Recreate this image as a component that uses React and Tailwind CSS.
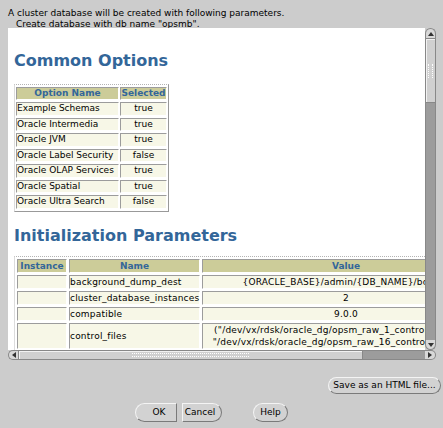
import React from "react";

const options = [
  ["Example Schemas", "true"],
  ["Oracle Intermedia", "true"],
  ["Oracle JVM", "true"],
  ["Oracle Label Security", "false"],
  ["Oracle OLAP Services", "true"],
  ["Oracle Spatial", "true"],
  ["Oracle Ultra Search", "false"],
];

const params = [
  ["background_dump_dest", ["{ORACLE_BASE}/admin/{DB_NAME}/bdump"]],
  ["cluster_database_instances", ["2"]],
  ["compatible", ["9.0.0"]],
  [
    "control_files",
    [
      '("/dev/vx/rdsk/oracle_dg/opsm_raw_1_control01_110m",',
      '"/dev/vx/rdsk/oracle_dg/opsm_raw_16_control02_110m")',
    ],
  ],
];

const cell =
  "border border-t-[#9c9c9c] border-l-[#9c9c9c] border-r-white border-b-white bg-[#f7f7e7] p-0 align-middle";
const head =
  "border border-t-[#9c9c9c] border-l-[#9c9c9c] border-r-white border-b-white bg-[#cccc99] p-0 text-[#336699] font-bold text-center align-middle";

function Arrow({ dir }) {
  const pts = {
    up: "0,4 3,0 6,4",
    down: "0,0 3,4 6,0",
    left: "4,0 0,3 4,6",
    right: "0,0 4,3 0,6",
  }[dir];
  const box = dir === "up" || dir === "down" ? "0 0 6 4" : "0 0 4 6";
  const size = dir === "up" || dir === "down" ? "w-[6px] h-[4px]" : "w-[4px] h-[6px]";
  return (
    <svg viewBox={box} className={size}>
      <polygon points={pts} fill="#333" />
    </svg>
  );
}

function VScroll() {
  return (
    <div className="w-[11px] h-[322px] flex flex-col">
      <div className="h-[10px] rounded-t-full border border-b-0 border-[#888] bg-[#d8d8d8] flex items-center justify-center">
        <Arrow dir="up" />
      </div>
      <div className="h-[65px] border border-[#888] bg-[#d0d0d0] shadow-[inset_1px_1px_0_#f2f2f2] flex items-center justify-center">
        <div className="w-[5px] h-[14px] border-x border-dotted border-white" />
      </div>
      <div className="flex-1 bg-[#9c9c9c] border-x border-[#888]" />
      <div className="h-[10px] rounded-b-full border border-t-0 border-[#888] bg-[#d8d8d8] flex items-center justify-center">
        <Arrow dir="down" />
      </div>
    </div>
  );
}

function HScroll() {
  return (
    <div className="h-[10px] w-[428px] flex">
      <div className="w-[10px] rounded-l-full border border-r-0 border-[#888] bg-[#d8d8d8] flex items-center justify-center">
        <Arrow dir="left" />
      </div>
      <div className="w-[345px] border border-[#888] bg-[#d0d0d0] shadow-[inset_1px_1px_0_#f2f2f2] flex items-center justify-center">
        <div className="w-[117px] h-[4px] border-y border-dotted border-white" />
      </div>
      <div className="w-[62px] bg-[#9c9c9c] border-y border-[#888]" />
      <div className="w-[11px] rounded-r-full border border-l-0 border-[#888] bg-[#d8d8d8] flex items-center justify-center">
        <Arrow dir="right" />
      </div>
    </div>
  );
}

export default function App() {
  return (
    <div className="w-[443px] h-[428px] bg-[#cccccc] font-['DejaVu_Sans',sans-serif] text-[9px] text-black overflow-hidden">
      <div className="h-[28px] pt-[8px] pl-[8px] leading-[11px] whitespace-nowrap">
        <p>A cluster database will be created with following parameters.</p>
        <p className="pl-[8px]">Create database with db name "opsmb".</p>
      </div>

      <div className="ml-[8px] w-[428px]">
        <div className="flex h-[322px]">
          <div className="w-[417px] bg-white overflow-hidden pl-[6px] pt-[23px]">
            <h2 className="text-[16px] leading-[20px] font-bold text-[#336699] whitespace-nowrap">
              Common Options
            </h2>
            <table className="mt-[13px] table-fixed w-[155px] border-separate border-spacing-x-[1px] border-spacing-y-[2px] border border-t-[#b4b4b4] border-l-[#dcdcdc] border-r-[#999] border-b-[#999] [border-top-style:dotted] leading-[11px] whitespace-nowrap">
              <thead>
                <tr>
                  <th className={head + " w-[103px] h-[13px]"}>Option Name</th>
                  <th className={head + " w-[47px] h-[13px]"}>Selected</th>
                </tr>
              </thead>
              <tbody>
                {options.map(([name, sel]) => (
                  <tr key={name}>
                    <td className={cell + " h-[13.5px] text-left"}>{name}</td>
                    <td className={cell + " h-[13.5px] text-center"}>{sel}</td>
                  </tr>
                ))}
              </tbody>
            </table>

            <h2 className="mt-[14px] text-[16px] leading-[20px] font-bold text-[#336699] whitespace-nowrap">
              Initialization Parameters
            </h2>
            <table className="mt-[10px] table-fixed w-[479px] border-separate border-spacing-[2px] border border-t-[#b4b4b4] border-l-[#dcdcdc] border-r-[#999] border-b-[#999] [border-top-style:dotted] leading-[12px] whitespace-nowrap">
              <thead>
                <tr>
                  <th className={head + " w-[50px] h-[13px]"}>Instance</th>
                  <th className={head + " w-[131px] h-[13px]"}>Name</th>
                  <th className={head + " w-[288px] h-[13px]"}>Value</th>
                </tr>
              </thead>
              <tbody className="tracking-[0.2px]">
                {params.map(([name, val]) => (
                  <tr key={name}>
                    <td className={cell + " h-[14px]"} />
                    <td className={cell + " h-[14px] text-left"}>{name}</td>
                    <td className={cell + " h-[14px] text-center"}>
                      {val.map((line) => (
                        <div key={line}>{line}</div>
                      ))}
                    </td>
                  </tr>
                ))}
                <tr>
                  <td className={cell + " h-[14px]"} />
                  <td className={cell + " h-[14px] text-left"}>core_dump_dest</td>
                  <td className={cell + " h-[14px] text-center"}>{"{ORACLE_BASE}/admin/{DB_NAME}/cdump"}</td>
                </tr>
              </tbody>
            </table>
          </div>
          <VScroll />
        </div>
        <HScroll />
      </div>

      <div className="flex justify-end pr-[2px] mt-[17px]">
        <button className="h-[17px] w-[113px] rounded-full border border-t-[#f4f4f4] border-l-[#f4f4f4] border-r-[#7a7a7a] border-b-[#7a7a7a] bg-[#d2d2d2] text-[9px] leading-[15px] text-black">
          Save as an HTML file...
        </button>
      </div>

      <div className="flex pl-[135px] mt-[9px]">
        <button className="h-[19px] w-[42px] rounded-l-full border border-t-[#f4f4f4] border-l-[#f4f4f4] border-r-[#7a7a7a] border-b-[#7a7a7a] bg-[#d2d2d2] text-[9px] pl-[6px] text-black">
          OK
        </button>
        <button className="ml-[5px] h-[19px] w-[40px] rounded-r-full border border-t-[#f4f4f4] border-l-[#f4f4f4] border-r-[#7a7a7a] border-b-[#7a7a7a] bg-[#d2d2d2] text-[9px] pr-[4px] text-black">
          Cancel
        </button>
        <button className="ml-[31px] h-[19px] w-[35px] rounded-full border border-t-[#f4f4f4] border-l-[#f4f4f4] border-r-[#7a7a7a] border-b-[#7a7a7a] bg-[#d2d2d2] text-[9px] text-black">
          Help
        </button>
      </div>
    </div>
  );
}
